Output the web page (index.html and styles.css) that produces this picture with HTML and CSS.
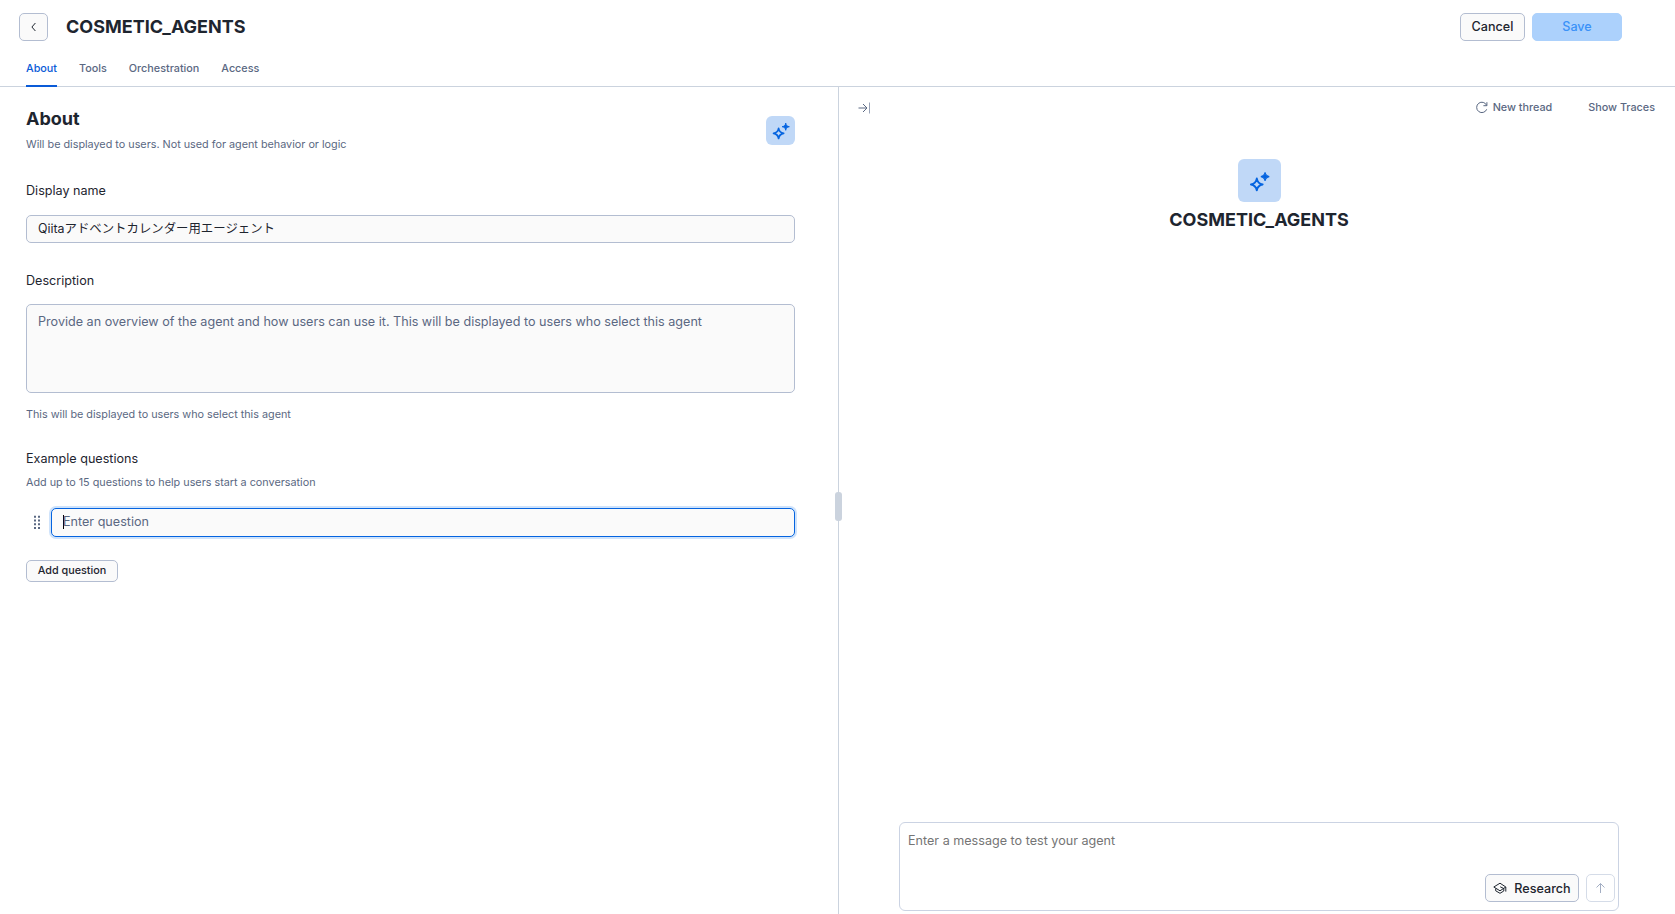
FILE: index.html
```html
<!DOCTYPE html>
<html lang="en">
<head>
    <meta charset="UTF-8">
    <meta name="viewport" content="width=device-width, initial-scale=1.0">
    <title>COSMETIC_AGENTS</title>
    <link rel="stylesheet" href="styles.css">
</head>
<body>
    <svg class="sprite" width="0" height="0">
        <symbol id="sparkle" viewBox="0 -1.6 20 20">
            <path d="M8 6.2 C8.6 9.6 9.9 10.9 13.3 11.5 C9.9 12.1 8.6 13.4 8 16.8 C7.4 13.4 6.1 12.1 2.7 11.5 C6.1 10.9 7.4 9.6 8 6.2 Z" fill="none" stroke="currentColor" stroke-width="1.8" stroke-linejoin="round"/>
            <path d="M15.5 0.6 C16 3.2 16.7 3.9 19.3 4.4 C16.7 4.9 16 5.6 15.5 8.2 C15 5.6 14.3 4.9 11.7 4.4 C14.3 3.9 15 3.2 15.5 0.6 Z" fill="currentColor" stroke="currentColor" stroke-width="1"/>
        </symbol>
    </svg>

    <header class="header">
        <button class="btn back-btn" aria-label="Back">
            <svg width="14" height="14" viewBox="0 0 14 14"><path d="M8.4 3 L4.9 7 L8.4 11"/></svg>
        </button>
        <h1>COSMETIC_AGENTS</h1>
        <div class="header-actions">
            <button class="btn cancel-btn">Cancel</button>
            <button class="btn save-btn">Save</button>
        </div>
    </header>

    <nav class="tabs">
        <a class="tab active">About</a>
        <a class="tab">Tools</a>
        <a class="tab">Orchestration</a>
        <a class="tab">Access</a>
    </nav>

    <main class="main">
        <section class="settings">
            <div class="section-head">
                <div>
                    <h2>About</h2>
                    <p class="hint">Will be displayed to users. Not used for agent behavior or logic</p>
                </div>
                <div class="avatar">
                    <svg width="19" height="19"><use href="#sparkle"/></svg>
                </div>
            </div>

            <label class="label">Display name</label>
            <div class="field name-field">Qiitaアドベントカレンダー用エージェント</div>

            <label class="label">Description</label>
            <div class="field description-field">Provide an overview of the agent and how users can use it. This will be displayed to users who select this agent</div>
            <p class="hint description-hint">This will be displayed to users who select this agent</p>

            <label class="label questions-label">Example questions</label>
            <p class="hint">Add up to 15 questions to help users start a conversation</p>
            <div class="question-row">
                <svg class="grip" width="8" height="14" viewBox="0 0 8 14">
                    <path d="M2 0.8V14M6 0.8V14"/>
                </svg>
                <div class="field question-field"><span class="caret"></span>Enter question</div>
            </div>
            <button class="btn add-btn">Add question</button>
        </section>

        <div class="divider"><div class="handle"></div></div>

        <section class="preview">
            <div class="toolbar">
                <svg class="collapse" width="13" height="12" viewBox="0 0 13 12">
                    <path d="M0.5 6H9M5 2L9 6L5 10"/>
                    <path class="bar" d="M11.5 0.5V11.5"/>
                </svg>
                <button class="link-btn">
                    <svg width="13" height="13" viewBox="0 0 13 13"><path d="M11.7 4.5A5.2 5.2 0 1 0 11.7 8.3M11.9 1.2V4.7H8.4"/></svg>
                    <span>New thread</span>
                </button>
                <button class="link-btn">Show Traces</button>
            </div>

            <div class="intro">
                <div class="avatar large">
                    <svg width="22" height="22"><use href="#sparkle"/></svg>
                </div>
                <h2>COSMETIC_AGENTS</h2>
            </div>

            <div class="composer">
                <span class="placeholder">Enter a message to test your agent</span>
                <div class="composer-actions">
                    <button class="btn research-btn">
                        <svg width="14" height="12" viewBox="0 0 14 12"><path d="M0.8 5L7 1.2L12.8 5L7 8.8ZM2.7 6.5V8.8L7 11.3L10.8 9V6.5M12.8 5V9.6M7.2 4.8L10.8 6.5"/></svg>
                        <span>Research</span>
                    </button>
                    <button class="btn send-btn" aria-label="Send">
                        <svg width="10" height="12" viewBox="0.5 0 10 12"><path d="M5 11V1.5M1 5.5L5 1.5L9 5.5"/></svg>
                    </button>
                </div>
            </div>
        </section>
    </main>
</body>
</html>
```
FILE: styles.css
```css
* {
    box-sizing: border-box;
}

body {
    margin: 0;
    height: 914px;
    display: flex;
    flex-direction: column;
    overflow: hidden;
    background: #fff;
    color: #1e252f;
    font-family: Inter, "Noto Sans CJK JP", sans-serif;
    font-size: 12.6px;
    line-height: 18px;
}

h1, h2, p {
    margin: 0;
}

h1, h2 {
    font-size: 18px;
    font-weight: 700;
    line-height: 24px;
}

svg {
    flex: none;
    fill: none;
    stroke: currentColor;
}

.sprite {
    position: absolute;
}

.btn {
    display: flex;
    align-items: center;
    justify-content: center;
    height: 28px;
    padding: 0;
    border: 1px solid #b3bdd1;
    border-radius: 5px;
    background: #fafafa;
    color: #1e252f;
    font-family: inherit;
    font-size: 12.6px;
    font-weight: 500;
    white-space: nowrap;
}

.header {
    display: flex;
    align-items: center;
    height: 54px;
    padding: 0 53px 0 19px;
}

.back-btn {
    width: 29px;
    margin-right: 18px;
}

.header-actions {
    display: flex;
    gap: 7px;
    margin-left: auto;
}

.cancel-btn {
    width: 65px;
    padding-bottom: 2px;
}

.save-btn {
    width: 90px;
    padding-bottom: 2px;
    border-color: #acd1fc;
    background: #acd1fc;
    color: #3b92f8;
}

.tabs {
    display: flex;
    gap: 22px;
    height: 33px;
    padding-left: 26px;
    border-bottom: 1px solid #cbd3de;
}

.tab {
    height: 33px;
    padding-top: 6px;
    color: #5a6882;
    font-size: 10.8px;
    font-weight: 500;
}

.tab.active {
    color: #0a5bd7;
    border-bottom: 2px solid #0a5bd7;
}

.main {
    display: flex;
    flex: 1;
    min-height: 0;
}

.settings {
    width: 838px;
    padding: 20px 43px 0 26px;
}

.section-head {
    display: flex;
    justify-content: space-between;
    margin-bottom: 28px;
}

.hint {
    color: #5a6882;
    font-size: 10.8px;
    line-height: 18px;
}

.section-head .hint {
    margin-top: 5px;
}

.avatar {
    display: flex;
    align-items: center;
    justify-content: center;
    width: 29px;
    height: 29px;
    margin-top: 9px;
    border-radius: 6px;
    background: #c0d8f7;
    color: #0564e0;
}

.avatar.large {
    width: 43px;
    height: 43px;
    margin: 0;
}

.label {
    display: block;
}

.field {
    border: 1px solid #b3bdd1;
    border-radius: 5px;
    background: #fafafa;
    padding: 4px 11px;
}

.name-field {
    height: 28px;
    margin: 15px 0 29px;
    font-size: 12.4px;
}

.description-field {
    height: 89px;
    margin: 14px 0 13px;
    padding-top: 8px;
    color: #5a6882;
}

.questions-label {
    margin: 26px 0 6px;
}

.question-row {
    display: flex;
    align-items: center;
    margin: 16px 0 23px;
    padding-left: 7px;
}

.grip {
    margin-bottom: 2px;
    stroke: #5a6882;
    stroke-width: 2;
    stroke-dasharray: 2 1.7;
}

.question-field {
    flex: 1;
    display: flex;
    align-items: center;
    height: 29px;
    margin-left: 10px;
    padding-bottom: 6px;
    border-color: #0564e0;
    box-shadow: 0 0 0 2px #cfe3fb;
    color: #5a6882;
}

.caret {
    width: 1px;
    height: 14px;
    margin-right: -1px;
    background: #000;
}

.add-btn {
    width: 92px;
    height: 22px;
    padding-bottom: 2px;
    font-size: 10.8px;
}

.divider {
    display: flex;
    align-items: center;
    width: 1px;
    background: #cbd3de;
}

.handle {
    flex: none;
    width: 7px;
    height: 29px;
    margin: 12px 0 0 -3px;
    border-radius: 3px;
    background: #cbd3de;
}

.preview {
    flex: 1;
    display: flex;
    flex-direction: column;
    padding: 0 20px 3px 19px;
}

.toolbar {
    display: flex;
    align-items: center;
    gap: 36px;
    height: 42px;
}

.collapse {
    margin-right: auto;
    color: #5a6882;
}

.collapse .bar {
    stroke: #9aa4b8;
}

.link-btn {
    display: flex;
    align-items: center;
    gap: 5px;
    padding: 0 0 1px;
    border: 0;
    background: none;
    color: #5a6882;
    font-family: inherit;
    font-size: 10.8px;
    font-weight: 500;
}

.intro {
    display: flex;
    flex-direction: column;
    align-items: center;
    gap: 6px;
    margin: 30px 0 0 5px;
}

.composer {
    display: flex;
    flex-direction: column;
    justify-content: space-between;
    height: 89px;
    margin: auto 36px 0 41px;
    padding: 9px 3px 8px 8px;
    border: 1px solid #cbd3e3;
    border-radius: 6px;
}

.placeholder {
    color: #757575;
}

.composer-actions {
    display: flex;
    justify-content: flex-end;
    gap: 7px;
}

.research-btn {
    width: 94px;
    gap: 7px;
}

.send-btn {
    width: 29px;
    border-color: #d5dce8;
    background: #fff;
    color: #a3aec3;
}
```
